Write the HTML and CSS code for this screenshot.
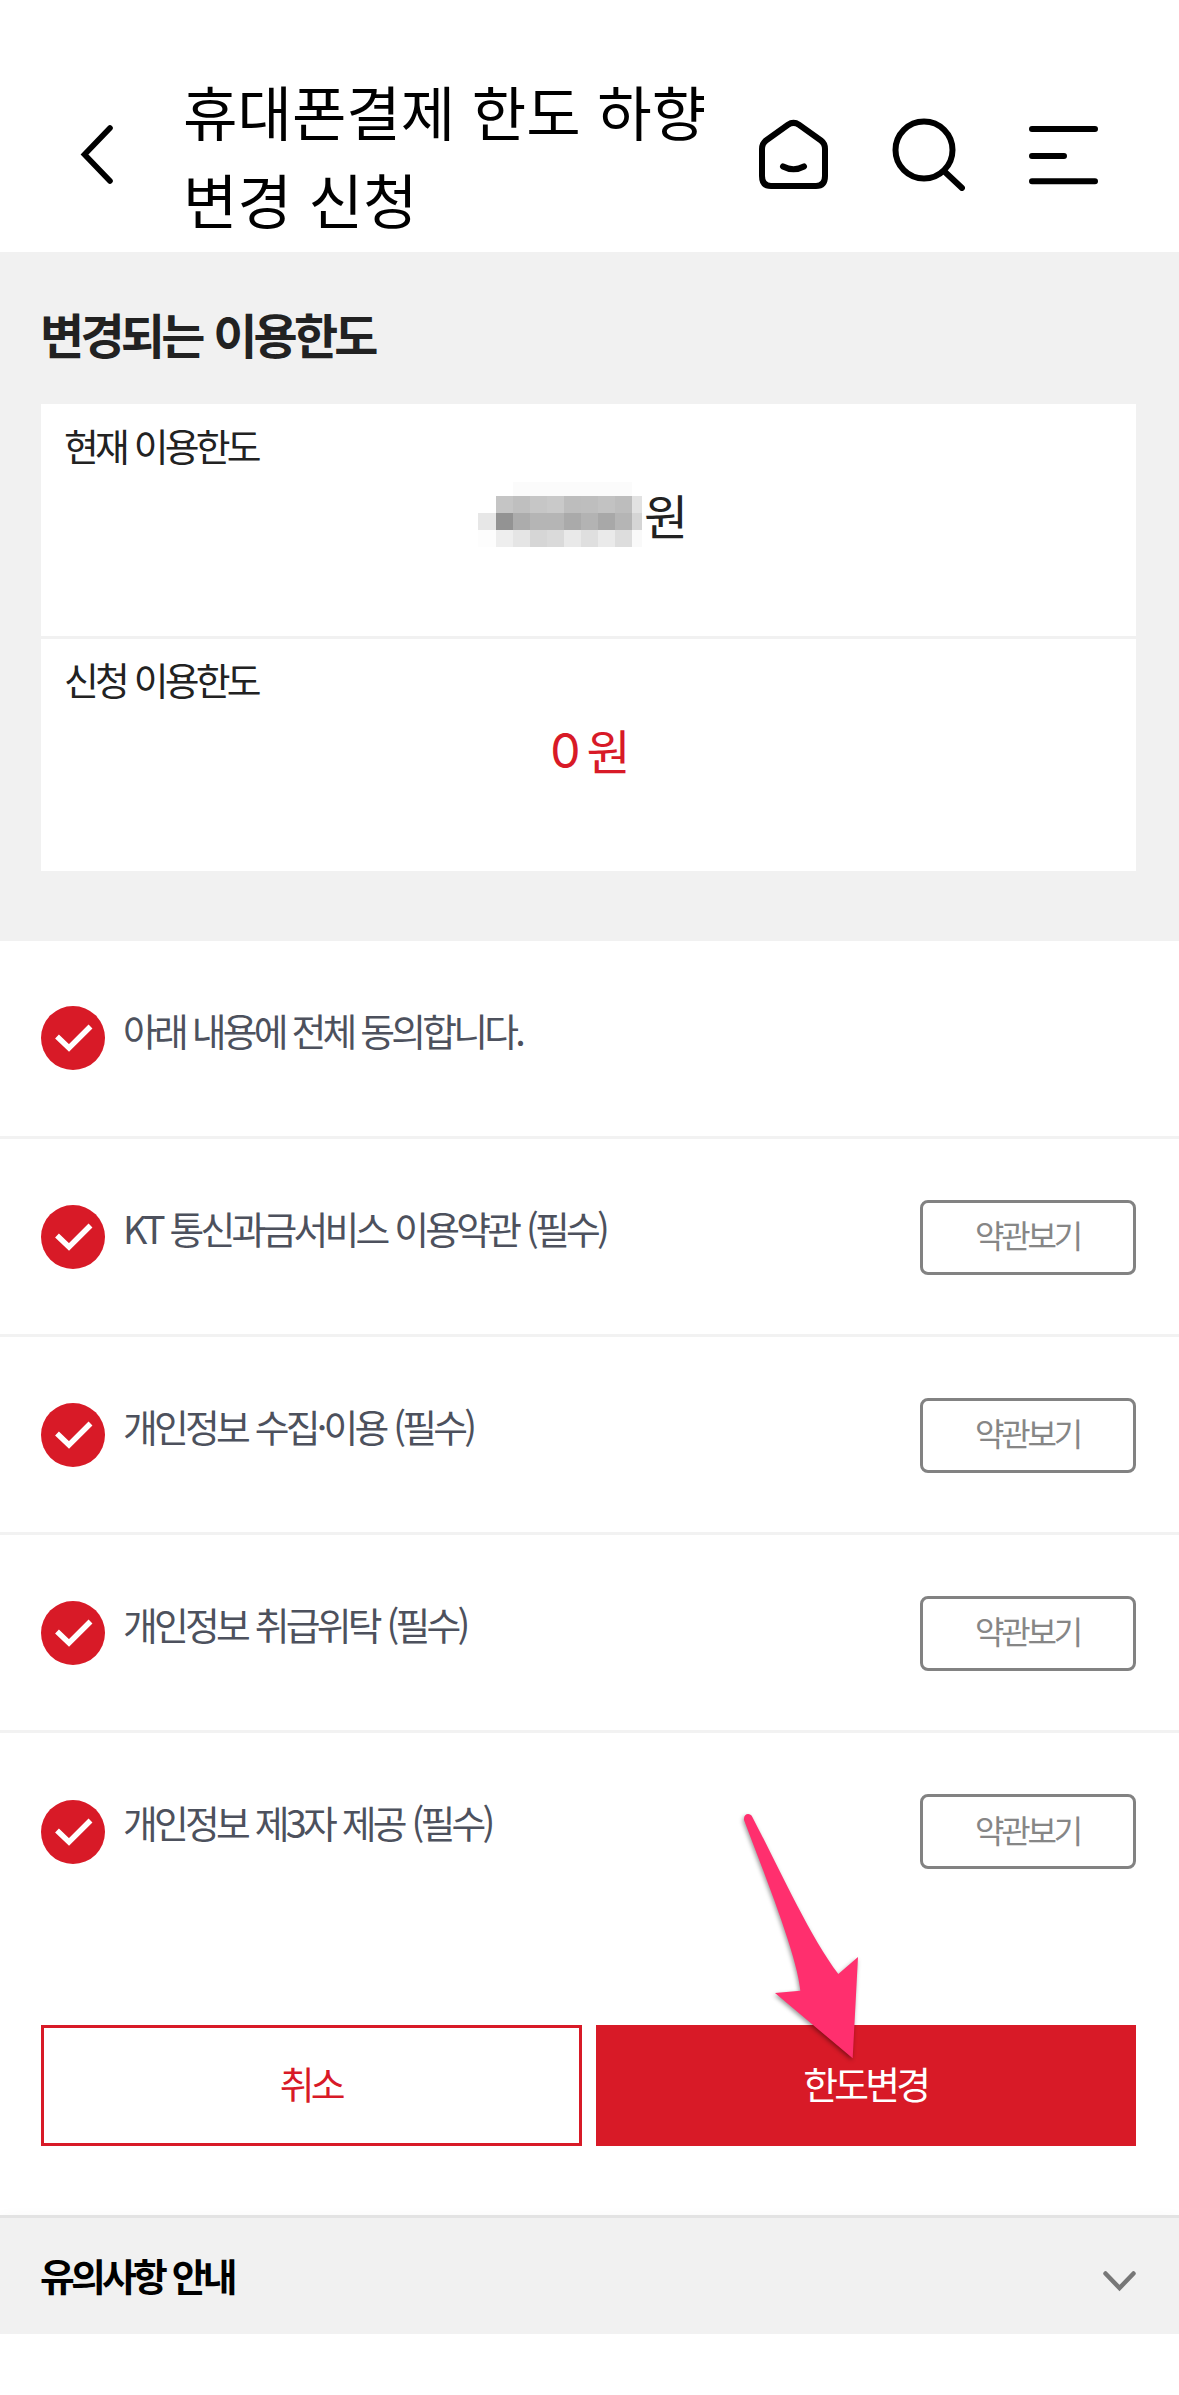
FILE: index.html
```html
<!DOCTYPE html>
<html lang="ko">
<head>
<meta charset="utf-8">
<title>휴대폰결제 한도 하향 변경 신청</title>
<link rel="stylesheet" href="styles.css">
</head>
<body>
<svg class="defs" width="0" height="0">
  <symbol id="check" viewBox="0 0 64 64">
    <circle cx="32" cy="32" r="32" fill="#d81a27"/>
    <path d="M16 30.500 28 42 49.500 20.500" fill="none" stroke="#fff" stroke-width="5.500"/>
  </symbol>
</svg>

<header class="header">
  <svg class="back" width="34" height="60" viewBox="0 0 34 60"><path d="M30 4 4.500 30.500 30 57" fill="none" stroke="#000" stroke-width="5.600" stroke-linecap="round"/></svg>
  <h1 class="header-title">휴대폰결제 한도 하향<br>변경 신청</h1>
  <nav class="tools">
    <svg width="69" height="72" viewBox="0 0 69 72" fill="none" stroke="#000" stroke-width="6" stroke-linecap="round">
      <path d="M29 6.800Q34.500 3 40 6.800L62 22.500Q66 25.500 66 31V58Q66 68 57 68H12Q3 68 3 58V31Q3 25.500 7 22.500Z"/>
      <path d="M24 48.500Q34.500 54 45 48.500"/>
    </svg>
    <svg width="73" height="73" viewBox="0 0 73 73" fill="none" stroke="#000" stroke-width="6" stroke-linecap="round">
      <circle cx="32" cy="32" r="28.500"/><path d="M53 54 70 70"/>
    </svg>
    <svg width="69" height="59" viewBox="0 0 69 59" fill="none" stroke="#000" stroke-width="6" stroke-linecap="round">
      <path d="M3 3H66M3 30H35M3 55.300H66"/>
    </svg>
  </nav>
</header>

<main>
  <section class="limit">
    <h2 class="limit-title">변경되는 이용한도</h2>
    <dl class="limit-card">
      <div class="limit-row">
        <dt>현재 이용한도</dt>
        <dd class="masked">
          <svg class="mosaic" width="164" height="65" viewBox="0 0 164 65" shape-rendering="crispEdges">
            <path fill="#fbfbfb" d="M35 0h119v14H35z"/>
            <path fill="#c5c5c5" d="M18 14h17v17H18z"/><path fill="#bfbfbf" d="M35 14h17v17H35z"/><path fill="#c6c6c6" d="M52 14h17v17H52z"/><path fill="#c9c9c9" d="M69 14h17v17H69z"/><path fill="#bdbdbd" d="M86 14h17v17H86z"/><path fill="#bebebe" d="M103 14h17v17h-17z"/><path fill="#c2c2c2" d="M120 14h17v17h-17z"/><path fill="#bdbdbd" d="M137 14h17v17h-17z"/><path fill="#e2e2e2" d="M154 14h10v17h-10z"/>
            <path fill="#e7e7e7" d="M0 31h18v17H0z"/><path fill="#939393" d="M18 31h17v17H18z"/><path fill="#acacac" d="M35 31h17v17H35z"/><path fill="#b5b5b5" d="M52 31h34v17H52z"/><path fill="#aaa" d="M86 31h17v17H86z"/><path fill="#b3b3b3" d="M103 31h17v17h-17z"/><path fill="#a8a8a8" d="M120 31h17v17h-17z"/><path fill="#b5b5b5" d="M137 31h17v17h-17z"/><path fill="#d5d5d5" d="M154 31h10v17h-10z"/>
            <path fill="#fdfdfd" d="M0 48h18v17H0z"/><path fill="#eee" d="M18 48h17v17H18z"/><path fill="#e5e5e5" d="M35 48h17v17H35z"/><path fill="#d6d6d6" d="M52 48h17v17H52z"/><path fill="#dadada" d="M69 48h17v17H69z"/><path fill="#e9e9e9" d="M86 48h17v17H86z"/><path fill="#dfdfdf" d="M103 48h17v17h-17z"/><path fill="#eaeaea" d="M120 48h17v17h-17z"/><path fill="#ddd" d="M137 48h17v17h-17z"/><path fill="#f9f9f9" d="M154 48h10v17h-10z"/>
          </svg>
          <span>원</span>
        </dd>
      </div>
      <div class="limit-row">
        <dt>신청 이용한도</dt>
        <dd class="new-limit"><span class="digit">0</span><span>원</span></dd>
      </div>
    </dl>
  </section>

  <ul class="terms">
    <li><svg class="check"><use href="#check"/></svg><span class="term">아래 내용에 전체 동의합니다.</span></li>
    <li><svg class="check"><use href="#check"/></svg><span class="term">KT 통신과금서비스 이용약관 (필수)</span><button class="view">약관보기</button></li>
    <li><svg class="check"><use href="#check"/></svg><span class="term">개인정보 수집·이용 (필수)</span><button class="view">약관보기</button></li>
    <li><svg class="check"><use href="#check"/></svg><span class="term">개인정보 취급위탁 (필수)</span><button class="view">약관보기</button></li>
    <li><svg class="check"><use href="#check"/></svg><span class="term">개인정보 제3자 제공 (필수)</span><button class="view">약관보기</button></li>
  </ul>

  <div class="actions">
    <button class="cancel">취소</button>
    <button class="confirm">한도변경</button>
    <svg class="pointer" width="124" height="254" viewBox="180 120 372 762"><path fill="#ff2f6e" d="M217 141C300 300 390 500 475 612L534 561 518 865 285 669 361 662C352 560 260 330 192 150C190 130 210 127 217 141Z"/></svg>
  </div>

  <section class="notice">
    <h3>유의사항 안내</h3>
    <svg width="33" height="21" viewBox="0 0 33 21"><path d="M2.500 2.500 16.500 17 30.500 2.500" fill="none" stroke="#777" stroke-width="4.500" stroke-linecap="round"/></svg>
  </section>
</main>
</body>
</html>
```
FILE: styles.css
```css
* { box-sizing: border-box; margin: 0; padding: 0; }

body {
  background: #fff;
  color: #222;
  font-family: "Noto Sans CJK KR", sans-serif;
  font-size: 37.8px;
  letter-spacing: -3.78px;
  word-spacing: 1px;
}

svg { display: block; flex: none; }
.defs { position: absolute; }
button { font: inherit; letter-spacing: inherit; background: #fff; }

.header {
  display: flex;
  align-items: flex-start;
  height: 252px;
  padding-left: 80px;
  padding-right: 81px;
  color: #000;
}
.back { margin-top: 124px; }
.header-title {
  flex: 1;
  margin-left: 69px;
  padding-top: 66px;
  font-size: 59.2px;
  font-weight: 400;
  line-height: 88px;
  letter-spacing: 0;
  word-spacing: 0;
  white-space: nowrap;
}
.tools { display: flex; align-items: flex-start; gap: 64px; padding-top: 118px; }
.tools svg:last-child { margin-top: 8px; }

.limit { height: 689px; padding: 43px 43px 0 41px; background: #f1f1f1; }
.limit-title {
  height: 109px;
  margin-left: -1px;
  font-size: 48px;
  font-weight: 700;
  line-height: 76px;
  word-spacing: 2px;
}
.limit-card { display: flex; flex-direction: column; gap: 3px; }
.limit-row { height: 232px; padding: 13px 24px 0; background: #fff; }
.limit-row:last-child { padding-top: 12px; }
.limit-row dt { margin-left: -1px; line-height: 56px; }
.limit-row dd {
  display: flex;
  justify-content: center;
  margin-top: 6px;
  font-size: 48px;
  line-height: 70px;
}
.limit-row .masked { justify-content: flex-start; padding-left: 413px; }
.mosaic { margin: 3px 2px 0 0; }
.limit-row .new-limit { gap: 9px; margin-top: 7px; color: #d81a27; }
.digit { padding-top: 2px; font-family: "Inter", sans-serif; letter-spacing: -3px; }

.terms { list-style: none; }
.terms li {
  display: flex;
  align-items: center;
  height: 198.200px;
  padding: 2px 43px 0 41px;
  border-bottom: 3px solid #f2f2f2;
}
.terms li:first-child { height: 197.500px; padding-top: 0; }
.terms li:last-child { border-bottom-color: transparent; }
.check { width: 64px; height: 64px; }
.term { flex: 1; margin: 0 0 19px 18px; line-height: 56px; color: #4d515d; }
.terms li:first-child .term { margin-bottom: 17px; word-spacing: 0; }
.view {
  width: 216px;
  height: 75px;
  padding: 0 1px 6px 0;
  border: 3px solid #828282;
  border-radius: 8px;
  color: #868686;
  font-size: 32px;
  letter-spacing: -3.200px;
}

.actions {
  position: relative;
  display: grid;
  grid-template-columns: 1fr 1fr;
  gap: 14px;
  padding: 94px 43px 69px 41px;
}
.actions button { height: 121px; padding: 0 1px 6px 0; border: 3px solid #d81a27; }
.cancel { color: #d81a27; }
.actions .confirm { background: #d81a27; color: #fff; }
.pointer {
  position: absolute;
  left: 740px;
  top: -121px;
  filter: drop-shadow(-1px 2px 2px rgba(0, 0, 0, .4));
}

.notice {
  display: flex;
  align-items: center;
  justify-content: space-between;
  height: 119px;
  padding: 0 43px 1px 40px;
  border-top: 3px solid #e3e3e3;
  background: #f1f1f1;
  box-shadow: 0 6px 18px rgba(0, 0, 0, .05);
}
.notice h3 { margin-bottom: 2px; color: #000; font-size: 37.800px; font-weight: 700; line-height: 56px; }
.notice svg { margin-top: 11px; }
```
